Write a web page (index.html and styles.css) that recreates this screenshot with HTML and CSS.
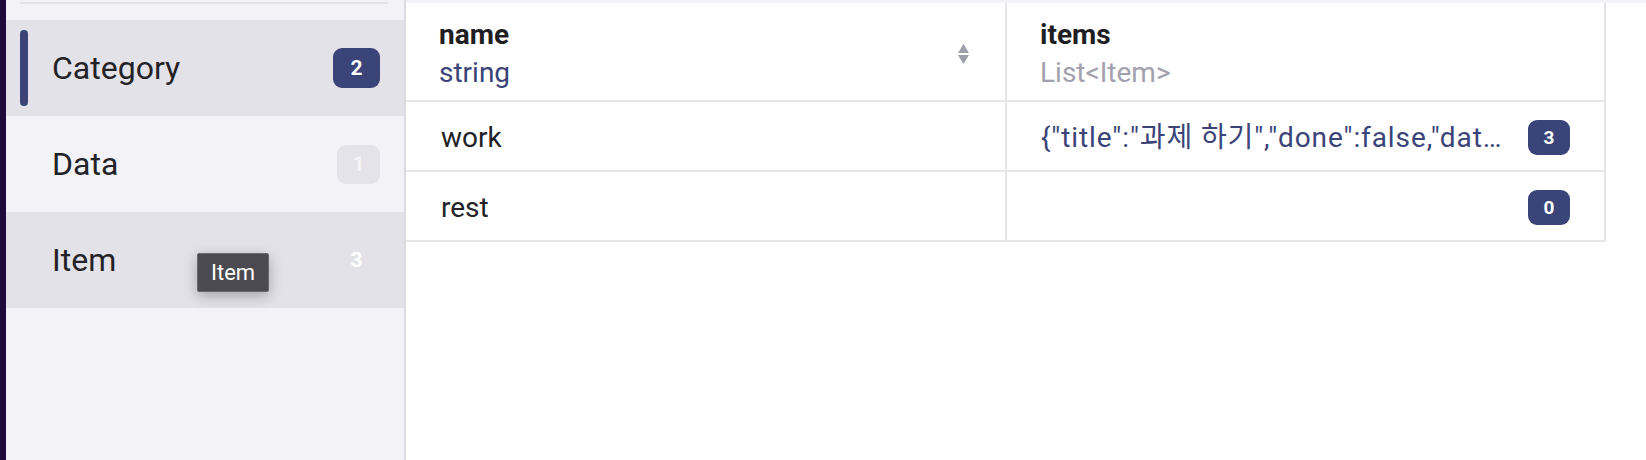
FILE: index.html
```html
<!DOCTYPE html>
<html lang="en">
<head>
<meta charset="utf-8">
<title>Realm</title>
<link rel="stylesheet" href="styles.css">
</head>
<body>
<div class="app">
  <div class="edge"></div>
  <aside class="sidebar">
    <div class="sep"></div>
    <ul class="classes">
      <li class="cls cls-selected">
        <span class="marker"></span>
        <span class="cls-name">Category</span>
        <span class="cls-count count-selected">2</span>
      </li>
      <li class="cls">
        <span class="marker"></span>
        <span class="cls-name">Data</span>
        <span class="cls-count count-muted">1</span>
      </li>
      <li class="cls cls-hover">
        <span class="marker"></span>
        <span class="cls-name">Item</span>
        <span class="cls-count count-hover">3</span>
        <span class="tooltip">Item</span>
      </li>
    </ul>
  </aside>
  <main class="content">
    <div class="topband"></div>
    <div class="grid">
      <div class="cell head">
        <div class="head-text">
          <div class="col-name">name</div>
          <div class="col-type type-string">string</div>
        </div>
        <svg class="sort" width="11" height="20" viewBox="0 0 11 20"><path d="M5.5 0 L11 9 L0 9 Z" fill="#9f9eab"/><path d="M0 11 L11 11 L5.5 20 Z" fill="#9f9eab"/></svg>
      </div>
      <div class="cell head">
        <div class="head-text">
          <div class="col-name">items</div>
          <div class="col-type type-list">List&lt;Item&gt;</div>
        </div>
      </div>

      <div class="cell body first">work</div>
      <div class="cell body list">
        <span class="json">{"title":"과제 하기","done":false,"date":"2021-05-01T00:00:00.000Z"}</span>
        <span class="tcount">3</span>
      </div>

      <div class="cell body first">rest</div>
      <div class="cell body list">
        <span class="json"></span>
        <span class="tcount">0</span>
      </div>
    </div>
  </main>
</div>
</body>
</html>
```
FILE: styles.css
```css
* { box-sizing: border-box; }
html, body { margin: 0; padding: 0; }
body {
  width: 1646px;
  height: 460px;
  overflow: hidden;
  font-family: Roboto, "Noto Sans CJK KR", sans-serif;
  color: #222226;
  background: #ffffff;
}
.app {
  display: flex;
  height: 460px;
}
.edge {
  width: 6px;
  flex: none;
  background: #1f0a3d;
}
.sidebar {
  width: 400px;
  flex: none;
  background: #f3f2f7;
  border-right: 2px solid #dcdbe1;
  padding-top: 2px;
}
.sep {
  height: 2px;
  margin: 0 16px 0 14px;
  background: #e4e3e9;
}
.classes {
  list-style: none;
  margin: 16px 0 0;
  padding: 0;
}
.cls {
  position: relative;
  display: flex;
  align-items: center;
  height: 96px;
  padding: 0 24px 0 14px;
  font-size: 32px;
}
.cls-selected, .cls-hover {
  background: #e3e2e8;
}
.marker {
  width: 8px;
  height: 76px;
  border-radius: 4px;
  margin-right: 24px;
  flex: none;
}
.cls-selected .marker {
  background: #3b4478;
}
.cls-name {
  flex: 1;
  color: #232327;
}
.cls-count {
  height: 40px;
  min-width: 43px;
  padding: 0 12px;
  border-radius: 9px;
  font-size: 21px;
  font-weight: 700;
  display: flex;
  align-items: center;
  justify-content: center;
}
.count-selected {
  min-width: 47px;
  background: #3b4478;
  color: #ffffff;
}
.count-muted {
  height: 39px;
  background: #e4e3e9;
  color: #f5f4f8;
}
.count-hover {
  color: #ffffff;
  padding-right: 16px;
}
.tooltip {
  position: absolute;
  left: 191px;
  top: 41px;
  height: 39px;
  padding: 0 13px;
  background: #4b4a50;
  border: 1px solid #69686e;
  border-radius: 2px;
  color: #ffffff;
  font-size: 22px;
  line-height: 37px;
  box-shadow: 0 4px 14px rgba(0, 0, 0, 0.28);
}
.content {
  flex: 1;
  min-width: 0;
}
.topband {
  height: 3px;
  background: #f3f2f6;
}
.grid {
  display: grid;
  grid-template-columns: 601px 599px;
  grid-template-rows: 99px 70px 70px;
  width: 1200px;
}
.cell {
  border-right: 2px solid #e6e6e9;
  border-bottom: 2px solid #e6e6e9;
  display: flex;
  align-items: center;
}
.head {
  padding: 4px 36px 0 33px;
}
.head-text {
  flex: 1;
}
.col-name {
  font-size: 28px;
  font-weight: 700;
  line-height: 38px;
  color: #1f1f23;
}
.col-type {
  font-size: 28px;
  line-height: 38px;
}
.type-string { color: #3b4478; }
.type-list { color: #a2a1ad; }
.sort { flex: none; display: block; }
.body {
  font-size: 28px;
  line-height: 33px;
  padding-top: 2px;
}
.first {
  padding-left: 35px;
  color: #222226;
}
.list {
  padding-left: 34px;
  padding-right: 34px;
}
.json {
  flex: 1;
  min-width: 0;
  overflow: hidden;
  white-space: nowrap;
  text-overflow: ellipsis;
  color: #3b4478;
  letter-spacing: 0.9px;
  margin-right: 20px;
}
.tcount {
  flex: none;
  height: 35px;
  min-width: 42px;
  padding: 0 10px;
  border-radius: 9px;
  background: #3b4478;
  color: #ffffff;
  font-size: 19px;
  font-weight: 700;
  line-height: 35px;
  text-align: center;
}
```
